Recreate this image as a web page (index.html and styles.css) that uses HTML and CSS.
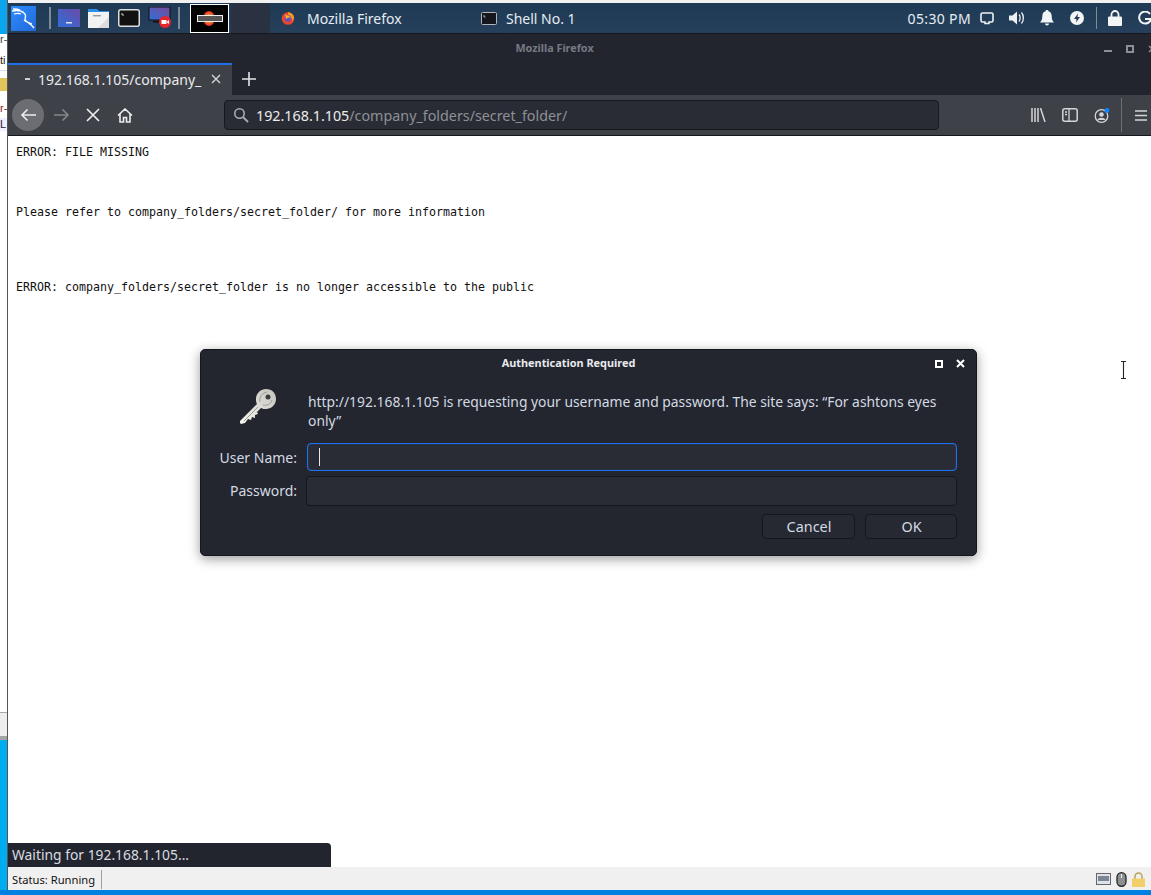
FILE: index.html
```html
<!DOCTYPE html>
<html lang="en">
<head>
  <meta charset="UTF-8" />
  <title>Mozilla Firefox</title>
  <link rel="stylesheet" href="styles.css">
</head>
<body>
<div class="screen">

  <div class="edge">
    <div class="edge-blue"></div>
    <div class="edge-page">
      <span class="edge-txt e1">r-</span>
      <span class="edge-txt e2">ti</span>
      <span class="edge-icon"></span>
      <span class="edge-txt e3">r-</span>
      <span class="edge-txt e4">L</span>
    </div>
    <div class="edge-grey"></div>
    <div class="edge-blue grow"></div>
  </div>

  <div class="main">
    <div class="top-line"></div>

    <div class="panel">
      <div class="panel-left">
        <svg class="kali" width="25" height="25" viewBox="0 0 25 25">
          <defs><linearGradient id="kbg" x1="0" y1="0" x2="1" y2="1"><stop offset="0" stop-color="#2b8dff"/><stop offset="1" stop-color="#2468d8"/></linearGradient></defs>
          <rect width="25" height="25" fill="url(#kbg)"/>
          <path d="M1 5c5-1 9-1 12 2 3 2 1 5 1 7 3 3 6 4 9 8M3 8c3-1 5-1 7 0M13 14c2 2 5 3 8 4M2 3c3 0 5 0 7 1" fill="none" stroke="#fff" stroke-width="1.3"/>
        </svg>
        <span class="sep sep-a"></span>
        <svg class="ic-wsp" width="24" height="20" viewBox="0 0 24 20">
          <defs><linearGradient id="wsp" x1="0" y1="1" x2="1" y2="0"><stop offset="0" stop-color="#2f6fd8"/><stop offset="1" stop-color="#6a4aa8"/></linearGradient></defs>
          <rect width="22" height="18" x="1" y="1" fill="url(#wsp)"/><rect x="9" y="14" width="6" height="1.5" fill="#dfe6f5"/>
        </svg>
        <svg class="ic-folder" width="23" height="20" viewBox="0 0 23 20">
          <path d="M1 1h9l2 2h10v3H1z" fill="#2a8fe8"/><path d="M1 4h21v16H1z" fill="#f2f2f2"/><rect x="6" y="7" width="8" height="1.4" fill="#999"/><path d="M22 9v11H11z" fill="#dcdcdc"/>
        </svg>
        <svg class="ic-term" width="22" height="18" viewBox="0 0 22 18">
          <rect x=".75" y=".75" width="20.5" height="16.5" rx="2" fill="#111" stroke="#ddd" stroke-width="1.5"/><path d="M4 4v2h2" fill="none" stroke="#ccc"/>
        </svg>
        <svg class="ic-cast" width="24" height="22" viewBox="0 0 24 22">
          <defs><linearGradient id="scr" x1="0" y1="1" x2="1" y2="0"><stop offset="0" stop-color="#2f6fd8"/><stop offset="1" stop-color="#7a4a98"/></linearGradient></defs>
          <rect x="1" y="0" width="21" height="13" fill="url(#scr)" stroke="#111"/><rect x="5" y="14" width="13" height="1.5" fill="#111"/>
          <circle cx="17" cy="15" r="6" fill="#e8242c"/><rect x="13.5" y="13" width="5" height="4" fill="#fff"/><path d="M18.5 15l2.5-2v4z" fill="#fff"/>
        </svg>
        <span class="sep sep-b"></span>
        <div class="thumb">
          <span class="flame"></span>
          <span class="thumb-bar"></span>
        </div>
        <div class="slot"></div>
      </div>

      <div class="task task-ff">
        <svg width="14" height="14" viewBox="0 0 14 14">
          <circle cx="7" cy="7.5" r="6.3" fill="#e8472c"/><path d="M7 1c4 1 6 3 6 6l-2 3c0-3-1-5-4-6z" fill="#f79a1f"/><circle cx="7" cy="7.5" r="3.2" fill="#6a4ec0"/><path d="M4 3c1 2 5 1 6 4-2-1-4 0-5 1z" fill="#fbb32f"/>
        </svg>
        <span>Mozilla Firefox</span>
      </div>
      <div class="task task-sh">
        <svg width="16" height="13" viewBox="0 0 16 13">
          <rect x=".5" y=".5" width="15" height="12" rx="1" fill="#15171c" stroke="#aeb4bc"/><path d="M3 3v2h1.500" fill="none" stroke="#ccc" stroke-width=".8"/>
        </svg>
        <span>Shell No. 1</span>
      </div>

      <div class="panel-right">
        <span class="clock">05:30 PM</span>
        <svg class="tray-a" width="14" height="13" viewBox="0 0 14 13"><path d="M2.500 1h9A1.500 1.500 0 0 1 13 2.500v6A1.500 1.500 0 0 1 11.500 10H9v1.500H5V10H2.500A1.500 1.500 0 0 1 1 8.500v-6A1.500 1.500 0 0 1 2.500 1z" fill="none" stroke="#eef1f4" stroke-width="1.600"/></svg>
        <svg class="tray-b" width="16" height="14" viewBox="0 0 16 14"><path d="M0 4.500h3.500L8 .5v13l-4.500-4H0z" fill="#eef1f4"/><path d="M10 3.500c1.500 1.500 1.500 5.500 0 7M12.500 1.500c2.500 3 2.500 8 0 11" fill="none" stroke="#eef1f4" stroke-width="1.300"/></svg>
        <svg class="tray-c" width="14" height="16" viewBox="0 0 14 16"><path d="M7 0c1 0 1.500.6 1.500 1.300C11 2 11.700 4 11.700 6.500c0 3 .8 4.500 2.300 6H0c1.500-1.500 2.300-3 2.300-6C2.300 4 3 2 5.500 1.300 5.500.6 6 0 7 0zM5 13.500h4a2 2 0 0 1-4 0z" fill="#f2f4f6"/></svg>
        <svg class="tray-d" width="14" height="14" viewBox="0 0 14 14"><circle cx="7" cy="7" r="7" fill="#f2f4f6"/><path d="M8 2.500L4 8h2.500L6 11.500 10 6H7.500z" fill="#263a52"/></svg>
        <span class="sep tray-sep"></span>
        <svg class="tray-e" width="14" height="16" viewBox="0 0 14 16"><path d="M3.500 7V4.500a3.500 3.500 0 0 1 7 0V7" fill="none" stroke="#f2f4f6" stroke-width="1.800"/><rect y="6.500" width="14" height="9.500" rx="1" fill="#f2f4f6"/></svg>
        <svg class="tray-f" width="13" height="14" viewBox="0 0 13 14"><path d="M12 3A6 6 0 1 0 13 8H7" fill="none" stroke="#f2f4f6" stroke-width="2"/></svg>
      </div>
    </div>

    <div class="browser">
      <div class="titlebar">
        <span class="win-title">Mozilla Firefox</span>
        <div class="win-btns">
          <span class="win-min"></span>
          <span class="win-max"></span>
          <svg width="8" height="8" viewBox="0 0 8 8"><path d="M1 1l6 6M7 1L1 7" stroke="#8b8e96" stroke-width="1.500"/></svg>
        </div>
      </div>
      <div class="tabbar">
        <div class="tab">
          <span class="tab-load"></span>
          <span class="tab-text">192.168.1.105/company_</span>
          <svg width="10" height="10" viewBox="0 0 10 10"><path d="M1 1l8 8M9 1L1 9" stroke="#d5d6d9" stroke-width="1.400"/></svg>
        </div>
        <svg class="newtab" width="14" height="14" viewBox="0 0 14 14"><path d="M7 0v14M0 7h14" stroke="#e4e5e7" stroke-width="1.600"/></svg>
      </div>
      <div class="toolbar">
        <div class="back">
          <svg width="17" height="14" viewBox="0 0 17 14"><path d="M16 7H2M7.500 1.500L2 7l5.500 5.500" fill="none" stroke="#eceded" stroke-width="1.600"/></svg>
        </div>
        <svg class="fwd" width="17" height="14" viewBox="0 0 17 14"><path d="M1 7h14M9.500 1.500L15 7l-5.500 5.500" fill="none" stroke="#85878c" stroke-width="1.600"/></svg>
        <svg class="stop" width="14" height="14" viewBox="0 0 14 14"><path d="M1 1l12 12M13 1L1 13" stroke="#eceded" stroke-width="1.700"/></svg>
        <svg class="home" width="16" height="15" viewBox="0 0 16 15"><path d="M1 7.500L8 1l7 6.500M3 6v8h3.500V9.500h3V14H13V6" fill="none" stroke="#eceded" stroke-width="1.600"/></svg>
        <div class="urlbar">
          <svg width="16" height="16" viewBox="0 0 16 16"><circle cx="6.500" cy="6.500" r="4.700" fill="none" stroke="#a9abb0" stroke-width="1.600"/><path d="M10 10l5 5" stroke="#a9abb0" stroke-width="1.800"/></svg>
          <span class="url"><b>192.168.1.105</b>/company_folders/secret_folder/</span>
        </div>
        <div class="tools">
          <svg width="15" height="14" viewBox="0 0 15 14"><path d="M1 0v14M4 0v14M7 0v14M9.500 0l4.500 14" fill="none" stroke="#d4d5d8" stroke-width="1.500"/></svg>
          <svg width="16" height="14" viewBox="0 0 16 14"><rect x=".8" y=".8" width="14.400" height="12.400" rx="2" fill="none" stroke="#d4d5d8" stroke-width="1.500"/><path d="M7 1v12M3 4h2M3 6.500h2" stroke="#d4d5d8" stroke-width="1.300"/></svg>
          <svg width="16" height="15" viewBox="0 0 16 15"><circle cx="7.500" cy="8" r="6.300" fill="none" stroke="#d4d5d8" stroke-width="1.300"/><circle cx="7.500" cy="6.500" r="2.300" fill="#d4d5d8"/><path d="M3.500 12c1-3 7-3 8 0z" fill="#d4d5d8"/><circle cx="13" cy="2.500" r="2.400" fill="#0a84ff"/></svg>
          <span class="tool-sep"></span>
          <svg width="12" height="11" viewBox="0 0 12 11"><path d="M0 1h12M0 5.500h12M0 10h12" stroke="#d4d5d8" stroke-width="1.600"/></svg>
        </div>
      </div>

      <div class="content">
        <p class="line l1">ERROR: FILE MISSING</p>
        <p class="line l2">Please refer to company_folders/secret_folder/ for more information</p>
        <p class="line l3">ERROR: company_folders/secret_folder is no longer accessible to the public</p>

        <div class="dialog">
          <div class="dlg-head">
            <span class="dlg-title">Authentication Required</span>
            <div class="dlg-btns">
              <span class="dlg-max"></span>
              <svg width="9" height="9" viewBox="0 0 9 9"><path d="M1 1l7 7M8 1L1 8" stroke="#fff" stroke-width="2"/></svg>
            </div>
          </div>
          <div class="dlg-msg">
            <svg class="key" width="38" height="38" viewBox="0 0 38 38">
              <defs><linearGradient id="keyg" x1="0" y1="1" x2="1" y2="0"><stop offset="0" stop-color="#f6f6f0"/><stop offset="1" stop-color="#c4c4bc"/></linearGradient></defs>
              <path d="M1 33L18 16c-1-2-1-3-1-5C17 5 22 1 27 1c6 0 10 4 10 10s-5 10-10 10c-2 0-3 0-5-1l-4 4 1 2-3 1 0 3-3-1-1 3-3-1-3 4-4 1-1-1z" fill="url(#keyg)"/>
              <circle cx="29" cy="9" r="2.500" fill="#3a3c40"/>
              <path d="M21 14c-1-5 2-9 7-10M24 17c4 1 8-1 9-5M5 33L19 19" fill="none" stroke="#98988f" stroke-width="1"/>
            </svg>
            <p>http://192.168.1.105 is requesting your username and password. The site says: “For ashtons eyes only”</p>
          </div>
          <div class="dlg-row">
            <label>User Name:</label>
            <div class="field focus"><span class="caret"></span></div>
          </div>
          <div class="dlg-row">
            <label class="label-pass">Password:</label>
            <div class="field"></div>
          </div>
          <div class="dlg-actions">
            <span class="btn btn-cancel">Cancel</span>
            <span class="btn btn-ok">OK</span>
          </div>
        </div>

        <svg class="ibeam" width="7" height="18" viewBox="0 0 7 18"><path d="M1 .5h5M1 17.500h5M3.500 1v16" fill="none" stroke="#222" stroke-width="1.100"/></svg>
        <div class="waiting">Waiting for 192.168.1.105...</div>
      </div>
    </div>

    <div class="statusbar">
      <span class="status-text">Status: Running</span>
      <span class="status-sep"></span>
      <div class="status-icons">
        <svg width="15" height="12" viewBox="0 0 15 12"><rect x=".5" y=".5" width="14" height="11" fill="#dfe3e8" stroke="#666"/><rect x="2" y="3" width="11" height="5" fill="#7b8594"/></svg>
        <svg width="11" height="15" viewBox="0 0 11 15"><rect x="1" y=".7" width="9" height="13.600" rx="4.500" fill="#8d8f92" stroke="#222" stroke-width="1.300"/><path d="M5.500 2v4" stroke="#eee"/></svg>
        <svg width="13" height="15" viewBox="0 0 13 15"><path d="M3 7V4.500a3.500 3.500 0 0 1 7 0V7" fill="none" stroke="#b5a25a" stroke-width="1.500"/><rect y="6.500" width="13" height="8.500" fill="#f2cf6a"/></svg>
      </div>
    </div>
    <div class="bottom-line"></div>
  </div>
</div>
</body>
</html>
```

FILE: styles.css
```css
* { box-sizing: border-box; }
html, body { margin: 0; height: 100%; overflow: hidden; }
body { font-family: "Noto Sans", sans-serif; background: #fff; }

.screen { display: flex; width: 1151px; height: 895px; }

/* strip of the host desktop on the left */
.edge {
  width: 8px;
  display: flex;
  flex-direction: column;
  border-right: 1px solid #555;
  overflow: hidden;
}
.edge-blue { height: 34px; background: #0aa5ee; }
.edge-blue.grow { height: auto; flex: 1; background: #00adf0; }
.edge-page { height: 678px; background: #fff; display: flex; flex-direction: column; }
.edge-grey { height: 28px; background: #eee; border-top: 1px solid #aaa; border-bottom: 4px solid #a5a5a5; }
.edge-txt { font: 11px "Liberation Sans", sans-serif; color: #444; height: 13px; line-height: 13px; }
.e1 { margin-top: -1px; }
.e2 { margin-top: 8px; color: #222; border-bottom: 1px solid #ddd; height: 17px; }
.edge-icon { margin-top: 7px; height: 13px; width: 7px; background: #e2c35c; }
.e3 { margin-top: 11px; color: #822; }
.e4 { margin-top: 3px; color: #223; background: #eef; }

.main { flex: 1; display: flex; flex-direction: column; min-width: 0; }
.top-line { height: 3px; background: #f1f1f1; }

/* kali panel */
.panel {
  height: 31px;
  display: flex;
  align-items: center;
  background: linear-gradient(#1f3a54, #26405c);
  border-bottom: 1px solid #16181d;
  color: #e6edf3;
  font-size: 14px;
  overflow: hidden;
}
.panel-left { display: flex; align-items: center; width: 262px; height: 100%; padding-left: 3px; }
.panel-left svg { flex: none; }
.sep { width: 2px; height: 22px; background: #7e8b99; }
.sep-a { margin: 0 6px 0 13px; }
.sep-b { margin: 0 10px 0 6px; }
.ic-wsp { margin-right: 6px; }
.ic-folder { margin-right: 8px; }
.ic-term { margin-right: 8px; }
.thumb {
  position: relative;
  width: 39px;
  height: 29px;
  background: #000;
  border: 1px solid #fff;
  flex: none;
  align-self: flex-end;
}
.flame {
  position: absolute;
  left: 12px;
  top: 6px;
  width: 12px;
  height: 15px;
  border-radius: 50%;
  background: radial-gradient(#f39a2c 30%, #e0242a 70%);
}
.thumb-bar {
  position: absolute;
  left: 6px;
  top: 10px;
  width: 26px;
  height: 7px;
  background: #555;
  border: 1px solid #eee;
}
.slot { width: 39px; height: 30px; background: #2a3140; margin-left: 2px; flex: none; }

.task { display: flex; align-items: center; }
.task-ff { width: 211px; gap: 12px; padding-left: 11px; }
.task-sh { gap: 9px; }
.panel-right { margin-left: auto; display: flex; align-items: center; height: 100%; }
.clock { margin-right: 9px; letter-spacing: 0.35px; }
.tray-a { margin-right: 15px; }
.tray-b { margin-right: 15px; }
.tray-c { margin-right: 16px; }
.tray-d { margin-right: 12px; }
.tray-sep { margin: 0 11px 0 0; width: 1px; }
.tray-e { margin-right: 16px; }

/* firefox window */
.browser { position: relative; display: flex; flex-direction: column; flex: 1; min-height: 0; }
.titlebar {
  height: 29px;
  background: #22252e;
  position: relative;
  display: flex;
  align-items: center;
  justify-content: center;
}
.win-title { font-size: 10.8px; font-weight: 700; color: #767982; margin-right: 50px; margin-top: -2px; }
.win-btns {
  position: absolute;
  right: -5px;
  top: 0;
  height: 100%;
  display: flex;
  align-items: center;
  gap: 14px;
}
.win-btns svg { flex: none; }
.win-min { width: 8px; height: 2px; background: #8b8e96; margin-top: 5px; }
.win-max { width: 8px; height: 8px; border: 2px solid #8b8e96; }

.tabbar {
  height: 32px;
  background: #22252e;
  display: flex;
  align-items: center;
}
.tab {
  width: 224px;
  height: 100%;
  background: #3f4149;
  border-top: 2px solid #1f6fe8;
  display: flex;
  align-items: center;
  color: #e9eaec;
  font-size: 14px;
  padding: 0 0 2px 17px;
}
.tab-load { width: 5px; height: 2px; background: #cfd0d3; margin-right: 8px; }
.tab-text { width: 170px; overflow: hidden; white-space: nowrap; }
.tab svg { margin-left: 3px; flex: none; }
.newtab { margin-left: 10px; }

.toolbar {
  height: 41px;
  background: #3f4149;
  border-bottom: 1px solid #17181d;
  display: flex;
  align-items: center;
  padding-left: 4px;
}
.back {
  width: 32px;
  height: 32px;
  border-radius: 50%;
  background: #6c6d73;
  display: flex;
  align-items: center;
  justify-content: center;
}
.fwd { margin-left: 9px; }
.stop { margin-left: 16px; }
.home { margin-left: 17px; }
.urlbar {
  width: 715px;
  height: 30px;
  margin-left: 91px;
  background: #2a2c35;
  border: 1px solid #17181d;
  border-radius: 4px;
  display: flex;
  align-items: center;
  padding-left: 8px;
  gap: 7px;
  font-size: 14.3px;
  color: #8e9096;
}
.url b { font-weight: 400; color: #eceded; }
.tools { display: flex; align-items: center; height: 100%; margin-left: 92px; }
.tools svg:nth-child(2) { margin-left: 16px; }
.tools svg:nth-child(3) { margin-left: 16px; }
.tool-sep { width: 1px; height: 34px; background: #6d6f75; margin-left: 11px; margin-right: 13px; }

/* page */
.content { position: relative; flex: 1; background: #fff; padding: 9px 8px 0; }
.line {
  margin: 0;
  font-family: "DejaVu Sans Mono", monospace;
  font-size: 11.63px;
  line-height: 15px;
  color: #111;
  white-space: pre;
}
.l2 { margin-top: 45px; }
.l3 { margin-top: 60px; }

.dialog {
  position: absolute;
  left: 192px;
  top: 213px;
  width: 777px;
  height: 207px;
  background: #23262f;
  border: 1px solid #14161b;
  border-radius: 5px;
  box-shadow: 0 3px 12px rgba(0, 0, 0, 0.4);
  color: #d3dae3;
  font-size: 14px;
}
.dlg-head { height: 27px; display: flex; align-items: center; justify-content: center; position: relative; }
.dlg-title { font-size: 10.9px; font-weight: 700; color: #e8eaed; margin-right: 40px; margin-top: -2px; }
.dlg-btns { position: absolute; right: 11px; top: 9px; display: flex; align-items: center; gap: 13px; }
.dlg-max { width: 8px; height: 8px; border: 2px solid #fff; }
.dlg-msg { display: flex; height: 61px; padding-top: 15px; }
.key { margin: -4px 0 0 38px; flex: none; }
.dlg-msg p { margin: 0 0 0 31px; width: 640px; line-height: 19px; font-size: 13.87px; }
.dlg-row { display: flex; align-items: center; height: 28px; margin-top: 5px; }
.dlg-row + .dlg-row { height: 30px; }
.dlg-row label { width: 96px; text-align: right; }
.dlg-row .label-pass { padding-bottom: 2px; }
.field {
  width: 651px;
  height: 100%;
  margin-left: 9px;
  background: #2a2c35;
  border: 1px solid #14161b;
  border-radius: 4px;
  display: flex;
  align-items: center;
  padding-left: 11px;
}
.field.focus { border-color: #2070f0; box-shadow: inset 0 0 1px #2070f0; margin-left: 10px; width: 650px; }
.caret { width: 1px; height: 18px; background: #e8e8e8; }
.dlg-actions { display: flex; justify-content: flex-end; gap: 10px; margin-top: 8px; padding-right: 19px; }
.btn {
  height: 25px;
  background: #262932;
  border: 1px solid #14161b;
  border-radius: 4px;
  display: flex;
  align-items: center;
  justify-content: center;
  font-size: 14.4px;
}
.btn-cancel { width: 93px; padding-left: 1px; }
.btn-ok { width: 92px; padding-left: 1px; }

.ibeam { position: absolute; left: 1112px; top: 225px; }

.waiting {
  position: absolute;
  left: 0;
  bottom: 0;
  width: 323px;
  height: 24px;
  background: #22252e;
  border-top-right-radius: 4px;
  color: #d9dce0;
  font-size: 13.85px;
  line-height: 24px;
  padding-left: 4px;
}

.statusbar {
  height: 23px;
  background: #f0f0f0;
  display: flex;
  align-items: center;
  font: 11.2px "Noto Sans", sans-serif;
  color: #111;
  padding: 1px 0 0 4px;
}
.status-sep { width: 1px; height: 19px; background: #a0a0a0; margin-left: 6px; }
.status-icons { margin-left: auto; display: flex; align-items: center; gap: 5px; padding-right: 6px; }
.bottom-line { height: 5px; background: #0080e0; margin-left: -8px; }
```
